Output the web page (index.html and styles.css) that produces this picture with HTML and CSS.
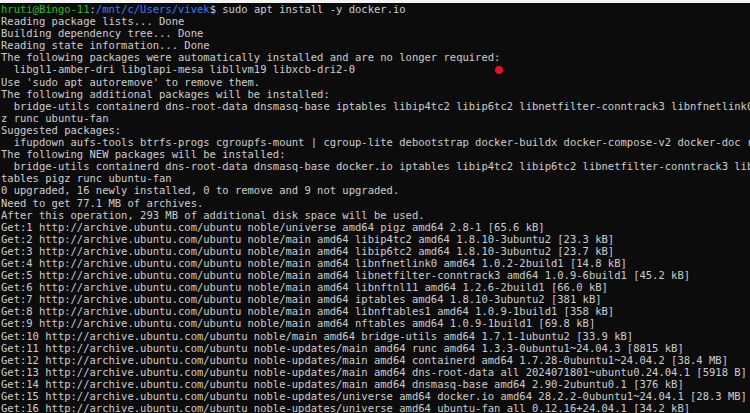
FILE: index.html
```html
<!DOCTYPE html>
<html>
<head>
<meta charset="utf-8">
<link rel="stylesheet" href="styles.css">
</head>
<body>
<div class="topbar"></div>
<div class="term">
<div class="line"><span class="user">hruti@Bingo-11</span>:<span class="path">/mnt/c/Users/vivek</span>$ sudo apt install -y docker.io</div>
<div class="line">Reading package lists... Done</div>
<div class="line">Building dependency tree... Done</div>
<div class="line">Reading state information... Done</div>
<div class="line">The following packages were automatically installed and are no longer required:</div>
<div class="line">  libgl1-amber-dri libglapi-mesa libllvm19 libxcb-dri2-0</div>
<div class="line">Use 'sudo apt autoremove' to remove them.</div>
<div class="line">The following additional packages will be installed:</div>
<div class="line">  bridge-utils containerd dns-root-data dnsmasq-base iptables libip4tc2 libip6tc2 libnetfilter-conntrack3 libnfnetlink0 libnftables1 libnftnl11 pig</div>
<div class="line">z runc ubuntu-fan</div>
<div class="line">Suggested packages:</div>
<div class="line">  ifupdown aufs-tools btrfs-progs cgroupfs-mount | cgroup-lite debootstrap docker-buildx docker-compose-v2 docker-doc rinse zfs-fuse | zfsutils</div>
<div class="line">The following NEW packages will be installed:</div>
<div class="line">  bridge-utils containerd dns-root-data dnsmasq-base docker.io iptables libip4tc2 libip6tc2 libnetfilter-conntrack3 libnfnetlink0 libnftables1 libnf</div>
<div class="line">tables pigz runc ubuntu-fan</div>
<div class="line">0 upgraded, 16 newly installed, 0 to remove and 9 not upgraded.</div>
<div class="line">Need to get 77.1 MB of archives.</div>
<div class="line">After this operation, 293 MB of additional disk space will be used.</div>
<div class="line">Get:1 http://archive.ubuntu.com/ubuntu noble/universe amd64 pigz amd64 2.8-1 [65.6 kB]</div>
<div class="line">Get:2 http://archive.ubuntu.com/ubuntu noble/main amd64 libip4tc2 amd64 1.8.10-3ubuntu2 [23.3 kB]</div>
<div class="line">Get:3 http://archive.ubuntu.com/ubuntu noble/main amd64 libip6tc2 amd64 1.8.10-3ubuntu2 [23.7 kB]</div>
<div class="line">Get:4 http://archive.ubuntu.com/ubuntu noble/main amd64 libnfnetlink0 amd64 1.0.2-2build1 [14.8 kB]</div>
<div class="line">Get:5 http://archive.ubuntu.com/ubuntu noble/main amd64 libnetfilter-conntrack3 amd64 1.0.9-6build1 [45.2 kB]</div>
<div class="line">Get:6 http://archive.ubuntu.com/ubuntu noble/main amd64 libnftnl11 amd64 1.2.6-2build1 [66.0 kB]</div>
<div class="line">Get:7 http://archive.ubuntu.com/ubuntu noble/main amd64 iptables amd64 1.8.10-3ubuntu2 [381 kB]</div>
<div class="line">Get:8 http://archive.ubuntu.com/ubuntu noble/main amd64 libnftables1 amd64 1.0.9-1build1 [358 kB]</div>
<div class="line">Get:9 http://archive.ubuntu.com/ubuntu noble/main amd64 nftables amd64 1.0.9-1build1 [69.8 kB]</div>
<div class="line">Get:10 http://archive.ubuntu.com/ubuntu noble/main amd64 bridge-utils amd64 1.7.1-1ubuntu2 [33.9 kB]</div>
<div class="line">Get:11 http://archive.ubuntu.com/ubuntu noble-updates/main amd64 runc amd64 1.3.3-0ubuntu1~24.04.3 [8815 kB]</div>
<div class="line">Get:12 http://archive.ubuntu.com/ubuntu noble-updates/main amd64 containerd amd64 1.7.28-0ubuntu1~24.04.2 [38.4 MB]</div>
<div class="line">Get:13 http://archive.ubuntu.com/ubuntu noble-updates/main amd64 dns-root-data all 2024071801~ubuntu0.24.04.1 [5918 B]</div>
<div class="line">Get:14 http://archive.ubuntu.com/ubuntu noble-updates/main amd64 dnsmasq-base amd64 2.90-2ubuntu0.1 [376 kB]</div>
<div class="line">Get:15 http://archive.ubuntu.com/ubuntu noble-updates/universe amd64 docker.io amd64 28.2.2-0ubuntu1~24.04.1 [28.3 MB]</div>
<div class="line">Get:16 http://archive.ubuntu.com/ubuntu noble-updates/universe amd64 ubuntu-fan all 0.12.16+24.04.1 [34.2 kB]</div>
<div class="dot"></div>
</div>
</body>
</html>
```
FILE: styles.css
```css
html, body {
  margin: 0;
  padding: 0;
  background: #0c0c0c;
  width: 750px;
  height: 413px;
  overflow: hidden;
}
.topbar {
  height: 3px;
  background: #f4f4f4;
}
.term {
  position: relative;
  background: #0c0c0c;
  color: #cccccc;
  font-family: "DejaVu Sans Mono", "Liberation Mono", monospace;
  font-size: 10.5px;
  line-height: 12.1px;
  padding-left: 1px;
  height: 410px;
  overflow: hidden;
}
.line {
  white-space: pre;
  overflow: hidden;
  height: 12.1px;
}
.user {
  color: #16c60c;
}
.path {
  color: #3b78ff;
}
.dot {
  position: absolute;
  left: 495px;
  top: 63px;
  width: 8px;
  height: 8px;
  border-radius: 50%;
  background: #e81123;
}
```
